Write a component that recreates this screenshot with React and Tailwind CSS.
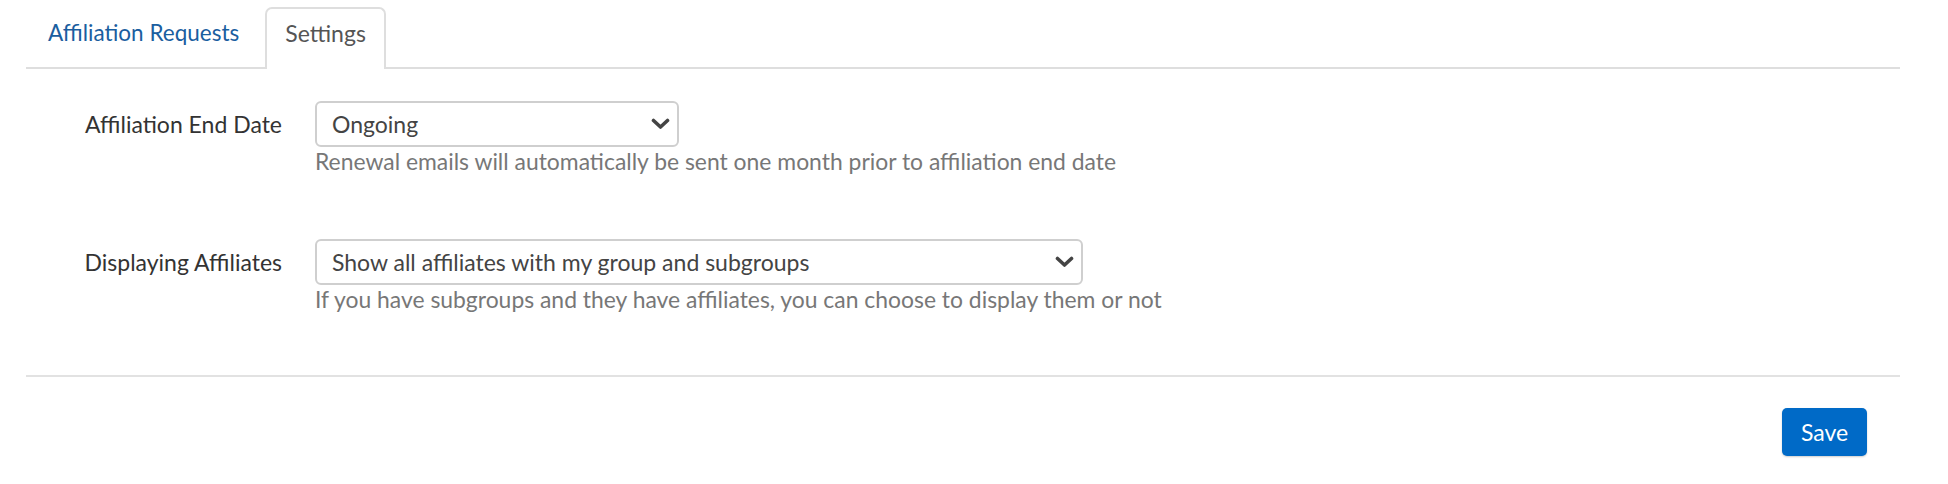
import React from 'react';

const FONT = { fontFamily: 'Lato, "Open Sans", sans-serif' };

function Chevron() {
  return (
    <svg width="19" height="12" viewBox="0 0 19 12" className="shrink-0">
      <polyline points="2.5,2.5 9.5,9 16.5,2.5" fill="none" stroke="#444" strokeWidth="3.6" strokeLinecap="round" strokeLinejoin="round" />
    </svg>
  );
}

function SelectBox({ value, width }) {
  return (
    <div className={`flex items-center justify-between h-[46px] ${width} border-2 border-[#cfcfcf] rounded-[6px] pl-[15px] pr-[7px] bg-white`}>
      <span className="text-[23px] text-[#444] leading-none">{value}</span>
      <Chevron />
    </div>
  );
}

function FormRow({ label, value, width, help }) {
  return (
    <div className="flex items-start">
      <div className="w-[256px] h-[46px] flex items-center justify-end text-[23px] text-[#333]">
        {label}
      </div>
      <div className="ml-[33px]">
        <SelectBox value={value} width={width} />
        <p className="text-[22.9px] leading-[28px] text-[#777]">{help}</p>
      </div>
    </div>
  );
}

export default function App() {
  return (
    <div className="w-[1948px] h-[484px] bg-white pl-[26px] pr-[48px] pt-[7px]" style={FONT}>
      {/* Tabs */}
      <div className="flex items-end border-b-2 border-[#dedede] h-[62px]">
        <div className="h-[62px] pl-[22px] pr-[21px] pt-[12px] text-[22.5px] leading-[28px] text-[#1a5e9f] mr-[5px] -mb-[2px]">
          Affiliation Requests
        </div>
        <div className="h-[62px] px-[18px] pt-[10px] text-[23px] leading-[28px] text-[#555] border-2 border-b-0 border-[#dedede] rounded-t-[7px] bg-white -mb-[2px]">
          Settings
        </div>
      </div>

      {/* Settings form */}
      <div className="pt-[32px]">
        <FormRow
          label="Affiliation End Date"
          value="Ongoing"
          width="w-[364px]"
          help="Renewal emails will automatically be sent one month prior to affiliation end date"
        />
        <div className="mt-[64px]">
          <FormRow
            label="Displaying Affiliates"
            value="Show all affiliates with my group and subgroups"
            width="w-[768px]"
            help="If you have subgroups and they have affiliates, you can choose to display them or not"
          />
        </div>
      </div>

      <div className="mt-[62px] border-t-2 border-[#e2e2e2]" />

      <div className="flex justify-end pt-[31px] pr-[33px]">
        <button className="w-[85px] h-[48px] rounded-[5px] bg-[#006ac7] text-white text-[23px] shadow-[0_1px_2px_rgba(0,0,0,0.2)]">
          Save
        </button>
      </div>
    </div>
  );
}
